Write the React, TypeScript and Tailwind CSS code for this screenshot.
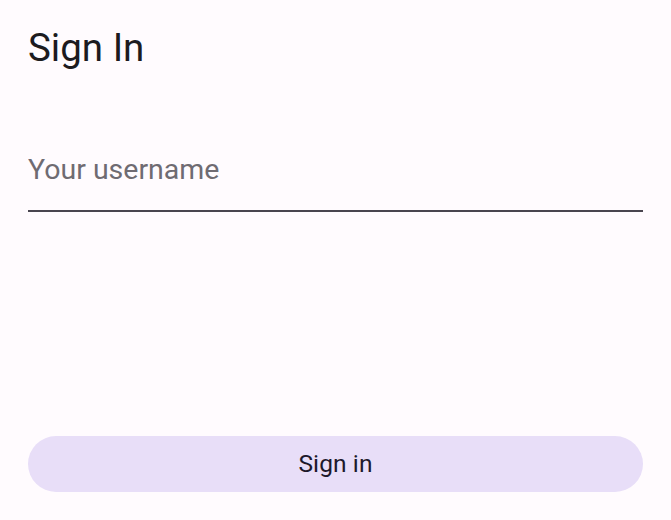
import React, { useState } from "react";

export default function App() {
  const [username, setUsername] = useState("");

  return (
    <div
      className="h-screen w-full bg-[#fffbfe] flex flex-col px-[28px] pb-[28px]"
      style={{ fontFamily: "Roboto, 'Noto Sans', sans-serif" }}
    >
      <h1 className="text-[38.5px] leading-[48px] text-[#1c1b1f] pt-[24px] font-normal">
        Sign In
      </h1>

      <div className="mt-[77px] border-b-2 border-[#49454f]">
        <input
          value={username}
          onChange={(e) => setUsername(e.target.value)}
          placeholder="Your username"
          className="w-full bg-transparent outline-none text-[28.5px] leading-[36px] pt-[3px] pb-[22px] text-[#1c1b1f] placeholder:text-[#6f6b72]"
        />
      </div>

      <div className="flex-1" />

      <button className="h-[56px] w-full rounded-full bg-[#e8def8] text-[#1d192b] text-[24.5px] tracking-[0.1px] pt-[1px]">
        Sign in
      </button>
    </div>
  );
}
